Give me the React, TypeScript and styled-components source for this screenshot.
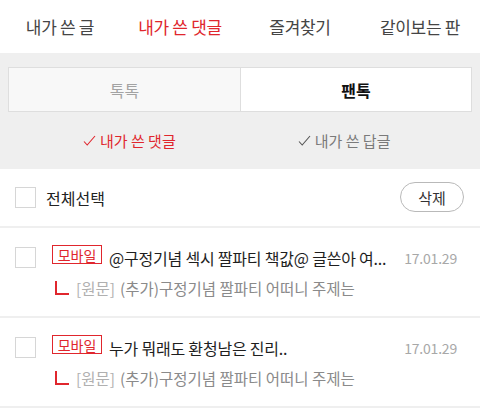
import React from "react";
import styled, { createGlobalStyle } from "styled-components";

const RED = "#e0262d";

const Global = createGlobalStyle`
  html, body { margin: 0; padding: 0; background: #fff; }
  body { font-family: "Noto Sans CJK KR", "Noto Sans", sans-serif; width: 480px; }
  * { box-sizing: border-box; }
`;

const Page = styled.div`
  width: 480px;
  background: #fff;
`;

const Nav = styled.nav`
  display: grid;
  grid-template-columns: repeat(4, 1fr);
  height: 53px;
  align-items: center;
`;

const NavItem = styled.div<{ $active?: boolean }>`
  text-align: center;
  font-size: 17px;
  letter-spacing: -0.3px;
  color: ${(p) => (p.$active ? RED : "#454545")};
  font-weight: 400;
  padding-bottom: 1px;
`;

const GraySection = styled.section`
  background: #efefef;
  padding: 14px 8px 0;
  height: 116px;
`;

const Segment = styled.div`
  display: grid;
  grid-template-columns: 1fr 1fr;
  height: 45px;
  border: 1px solid #dedede;
`;

const SegTab = styled.div<{ $active?: boolean }>`
  display: flex;
  align-items: center;
  justify-content: center;
  font-size: 16px;
  background: ${(p) => (p.$active ? "#fff" : "#f8f8f8")};
  color: ${(p) => (p.$active ? "#111" : "#a3a3a3")};
  font-weight: ${(p) => (p.$active ? 700 : 400)};
  & + & { border-left: 1px solid #dedede; }
`;

const SubTabs = styled.div`
  display: flex;
  align-items: center;
  height: 56px;
  padding-left: 75px;
  gap: 122px;
`;

const SubTab = styled.div<{ $active?: boolean }>`
  display: flex;
  align-items: center;
  gap: 4px;
  font-size: 15px;
  color: ${(p) => (p.$active ? RED : "#7a7a7a")};
  font-weight: 400;
`;

const Toolbar = styled.div`
  display: flex;
  align-items: center;
  height: 59px;
  padding: 0 16px 0 15px;
  border-bottom: 2px solid #efefef;
`;

const Check = styled.span`
  display: inline-block;
  width: 21px;
  height: 21px;
  border: 1px solid #d6d6d6;
  background: #fff;
  flex: none;
`;

const ToolbarLabel = styled.span`
  margin-left: 10px;
  font-size: 16px;
  color: #222;
  flex: 1;
`;

const DeleteButton = styled.button`
  width: 64px;
  height: 30px;
  border-radius: 15px;
  border: 1px solid #b9b9b9;
  background: #fff;
  font-family: inherit;
  font-size: 15px;
  color: #333;
  padding: 0;
  margin-top: -1px;
`;

const Item = styled.div`
  display: flex;
  align-items: flex-start;
  height: 90px;
  padding: 19px 23px 0 15px;
  border-bottom: 2px solid #efefef;
`;

const Body = styled.div`
  flex: 1;
  min-width: 0;
  margin-left: 16px;
  margin-top: -1px;
`;

const TitleRow = styled.div`
  display: flex;
  align-items: center;
  height: 24px;
`;

const Badge = styled.span`
  flex: none;
  display: inline-flex;
  align-items: center;
  justify-content: center;
  width: 50px;
  height: 19px;
  border: 1px solid ${RED};
  color: ${RED};
  font-size: 14px;
  line-height: 1;
  margin-top: -7px;
`;

const Title = styled.span`
  flex: 1;
  min-width: 0;
  margin-left: 7px;
  font-size: 16px;
  color: #1e1e1e;
  white-space: nowrap;
  overflow: hidden;
  text-overflow: clip;
  letter-spacing: -0.2px;
`;

const DateText = styled.span`
  flex: none;
  margin-left: 14px;
  font-size: 14px;
  color: #a8a8a8;
  letter-spacing: -0.2px;
`;

const ReplyRow = styled.div`
  display: flex;
  align-items: center;
  margin-top: 7px;
  font-size: 15.5px;
  color: #8a8a8a;
`;

const Origin = styled.span`
  color: #b0b0b0;
  margin-left: 7px;
  margin-right: 5px;
`;

const Tick = ({ color }: { color: string }) => (
  <svg width="13" height="11" viewBox="0 0 13 11" fill="none">
    <path d="M1 6.5 L4.2 10 L12 1" stroke={color} strokeWidth="1.1" />
  </svg>
);

const Corner = () => (
  <svg width="14" height="14" viewBox="0 0 14 14" fill="none" style={{ marginLeft: 3 }}>
    <path d="M1 0 V13 H14" stroke={RED} strokeWidth="2" />
  </svg>
);

const items = [
  { title: "@구정기념 섹시 짤파티 책값@ 글쓴아 여...", date: "17.01.29" },
  { title: "누가 뭐래도 환청남은 진리..", date: "17.01.29" },
];

export default function App() {
  return (
    <Page>
      <Global />
      <Nav>
        <NavItem>내가 쓴 글</NavItem>
        <NavItem $active>내가 쓴 댓글</NavItem>
        <NavItem>즐겨찾기</NavItem>
        <NavItem>같이보는 판</NavItem>
      </Nav>
      <GraySection>
        <Segment>
          <SegTab>톡톡</SegTab>
          <SegTab $active>팬톡</SegTab>
        </Segment>
        <SubTabs>
          <SubTab $active>
            <Tick color={RED} />
            내가 쓴 댓글
          </SubTab>
          <SubTab>
            <Tick color="#555" />
            내가 쓴 답글
          </SubTab>
        </SubTabs>
      </GraySection>
      <Toolbar>
        <Check />
        <ToolbarLabel>전체선택</ToolbarLabel>
        <DeleteButton>삭제</DeleteButton>
      </Toolbar>
      {items.map((it, i) => (
        <Item key={i}>
          <Check />
          <Body>
            <TitleRow>
              <Badge>모바일</Badge>
              <Title>{it.title}</Title>
              <DateText>{it.date}</DateText>
            </TitleRow>
            <ReplyRow>
              <Corner />
              <Origin>[원문]</Origin>
              (추가)구정기념 짤파티 어떠니 주제는
            </ReplyRow>
          </Body>
        </Item>
      ))}
    </Page>
  );
}
